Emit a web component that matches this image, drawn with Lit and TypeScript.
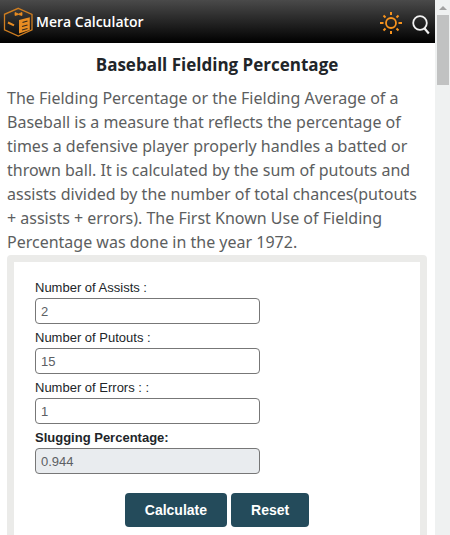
import { LitElement, html, css } from "lit";
import { customElement, state } from "lit/decorators.js";

@customElement("app-header")
class AppHeader extends LitElement {
  static styles = css`
    :host {
      display: flex;
      align-items: center;
      justify-content: space-between;
      height: 43px;
      padding: 0 4px 0 3px;
      background: linear-gradient(#4a4a4a, #000);
      font-family: "Open Sans", "Noto Sans", sans-serif;
    }
    .brand {
      display: flex;
      align-items: center;
      gap: 3px;
      color: #fff;
      font-size: 14px;
      font-weight: 600;
      text-decoration: none;
    }
    .tools {
      display: flex;
      align-items: center;
      gap: 8px;
    }
    .tool {
      display: flex;
      padding: 0;
      border: 0;
      background: none;
    }
    svg {
      display: block;
      fill: none;
    }
  `;

  render() {
    return html`
      <a class="brand" href="#">
        <svg width="30" height="30" viewBox="0 0 30 30" stroke="#e88c22">
          <path d="M15.300 1.300 29 7.300V22.800L15.300 29 1.500 22.800V7.300Z" stroke-width="1.300" stroke="#d07e20" />
          <path d="M16 13 26.800 10.200V23L16 26.500Z" fill="#e88c22" stroke="none" />
          <path d="M19.500 15.500 24.500 14M19 19.500 24.500 18M19 23 24.500 21.500" stroke="#33291c" stroke-width="1.200" />
          <path d="M5 15.500 11 18.300" stroke-width="2" />
          <path d="M12 5.500 15.500 7 19 5.500V8.500L15.500 7.500 12 8.500Z" fill="#e88c22" stroke-width="0.800" />
        </svg>
        <span>Mera Calculator</span>
      </a>
      <div class="tools">
        <button class="tool" aria-label="Theme">
          <svg width="24" height="24" viewBox="0 -1 24 24" stroke="#f7931e" stroke-width="2">
            <circle cx="12" cy="12" r="5" stroke-width="1.8" />
            <path
              d="M12 1V4M12 20V23M1 12H4.500M19.500 12H23M4.500 4.500 6.500 6.500M17.500 17.500 19.500 19.500M4.500 19.500 6.500 17.500M17.500 6.500 19.500 4.500"
            />
          </svg>
        </button>
        <button class="tool" aria-label="Search">
          <svg width="20" height="28" viewBox="0 -6 20 28" stroke="#f2f2f2">
            <circle cx="9" cy="9" r="6.800" stroke-width="1.800" />
            <path d="M13.200 14 17.800 19.500" stroke-width="2.200" />
          </svg>
        </button>
      </div>
    `;
  }
}

@customElement("scroll-rail")
class ScrollRail extends LitElement {
  static styles = css`
    :host {
      display: flex;
      flex-direction: column;
      align-items: center;
      gap: 5px;
      padding-top: 6px;
      background: #eff1f1;
    }
    .arrow {
      border: 4px solid transparent;
      border-top: 0;
      border-bottom-color: #a2a2a2;
    }
    .thumb {
      width: 12px;
      height: 70px;
      background: #c1c2c2;
    }
  `;

  render() {
    return html`<div class="arrow"></div><div class="thumb"></div>`;
  }
}

@customElement("app-root")
class AppRoot extends LitElement {
  static styles = css`
    :host {
      display: grid;
      grid-template-columns: minmax(0, 1fr) 15px;
      height: 100vh;
      overflow: hidden;
      background: #fff;
    }
    .page {
      overflow: hidden;
    }
    main {
      padding: 8px 8px 0 7px;
      font-family: "Open Sans", "Noto Sans", sans-serif;
    }
    h1 {
      margin: 0;
      font-size: 17px;
      line-height: 28px;
      text-align: center;
      color: #212529;
    }
    .intro {
      margin: 7px 0 0;
      font-family: "Noto Sans", "Open Sans", sans-serif;
      font-size: 16px;
      line-height: 24px;
      color: #5c5e60;
    }
    .card {
      margin: 1px 0 0;
      border: 7px solid #ebebe9;
      border-radius: 4px;
      padding: 16px 21px;
      font-family: "Liberation Sans", Arial, sans-serif;
      font-size: 13px;
    }
    .fields {
      display: grid;
      gap: 4px;
    }
    .field {
      display: flex;
      flex-direction: column;
      width: 225px;
    }
    label {
      line-height: 20px;
      color: #212529;
    }
    .strong {
      font-weight: 700;
    }
    input {
      box-sizing: border-box;
      width: 100%;
      height: 26px;
      padding: 0 5px;
      border: 1px solid #777;
      border-radius: 4px;
      background: #fff;
      color: #5c6064;
      font: inherit;
    }
    .result {
      background: #e9ecef;
    }
    .actions {
      display: flex;
      justify-content: center;
      gap: 4px;
      padding-top: 19px;
    }
    .action {
      height: 34px;
      padding: 0 20px;
      border: 0;
      border-radius: 4px;
      background: #244b5b;
      color: #fff;
      font: bold 14px "Liberation Sans", Arial, sans-serif;
    }
  `;

  @state() private assists = "2";
  @state() private putouts = "15";
  @state() private errors = "1";
  @state() private result = "0.944";

  private calculate() {
    const made = Number(this.assists) + Number(this.putouts);
    const chances = made + Number(this.errors);
    this.result = chances ? (made / chances).toFixed(3) : "";
  }

  private reset() {
    this.assists = this.putouts = this.errors = this.result = "";
  }

  private value(e: Event) {
    return (e.target as HTMLInputElement).value;
  }

  render() {
    return html`
      <div class="page">
        <app-header></app-header>
        <main>
          <h1>Baseball Fielding Percentage</h1>
          <p class="intro">
            The Fielding Percentage or the Fielding Average of a<br />
            Baseball is a measure that reflects the percentage of<br />
            times a defensive player properly handles a batted or<br />
            thrown ball. It is calculated by the sum of putouts and<br />
            assists divided by the number of total chances(putouts<br />
            + assists + errors). The First Known Use of Fielding<br />
            Percentage was done in the year 1972.
          </p>
          <section class="card">
            <div class="fields">
              <div class="field">
                <label for="assists">Number of Assists :</label>
                <input id="assists" .value=${this.assists} @input=${(e: Event) => (this.assists = this.value(e))} />
              </div>
              <div class="field">
                <label for="putouts">Number of Putouts :</label>
                <input id="putouts" .value=${this.putouts} @input=${(e: Event) => (this.putouts = this.value(e))} />
              </div>
              <div class="field">
                <label for="errors">Number of Errors : :</label>
                <input id="errors" .value=${this.errors} @input=${(e: Event) => (this.errors = this.value(e))} />
              </div>
              <div class="field">
                <label class="strong" for="result">Slugging Percentage:</label>
                <input class="result" id="result" readonly .value=${this.result} />
              </div>
            </div>
            <div class="actions">
              <button class="action" @click=${this.calculate}>Calculate</button>
              <button class="action" @click=${this.reset}>Reset</button>
            </div>
          </section>
        </main>
      </div>
      <scroll-rail></scroll-rail>
    `;
  }
}
